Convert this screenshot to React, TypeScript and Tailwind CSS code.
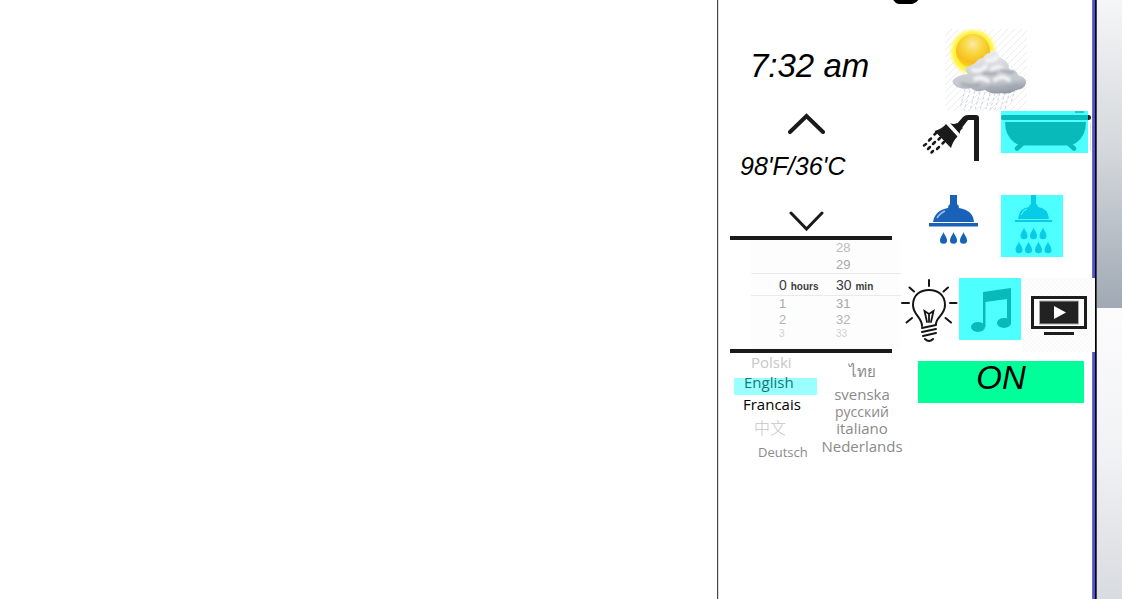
import React from "react";

function Weather() {
  return (
    <svg width="82" height="82" viewBox="0 0 82 82" aria-label="Sun, cloud and rain" role="img">
      <defs>
        <pattern id="hatch" width="7" height="7" patternUnits="userSpaceOnUse">
          <path d="M-1 8 8 -1" stroke="#ececec" strokeWidth="1" />
        </pattern>
        <radialGradient id="glow">
          <stop offset="62%" stopColor="#ffee1a" />
          <stop offset="80%" stopColor="#fff43c" stopOpacity="0.85" />
          <stop offset="100%" stopColor="#fffba0" stopOpacity="0" />
        </radialGradient>
        <radialGradient id="sun" cx="50%" cy="30%" r="75%">
          <stop offset="0%" stopColor="#fbeaa8" />
          <stop offset="35%" stopColor="#f9d842" />
          <stop offset="72%" stopColor="#f6bd1c" />
          <stop offset="100%" stopColor="#fae01c" />
        </radialGradient>
        <linearGradient id="cloud" x1="0.3" y1="0" x2="0.5" y2="1">
          <stop offset="0%" stopColor="#f0f1f3" />
          <stop offset="45%" stopColor="#d0d3d8" />
          <stop offset="75%" stopColor="#c3c7ce" />
          <stop offset="100%" stopColor="#9399a4" />
        </linearGradient>
        <filter id="soft" x="-30%" y="-30%" width="160%" height="160%">
          <feGaussianBlur stdDeviation="1.6" />
        </filter>
      </defs>
      <rect width="82" height="82" fill="url(#hatch)" />
      <circle cx="28" cy="23" r="25" fill="url(#glow)" />
      <circle cx="28" cy="22" r="17" fill="url(#sun)" />
      <g stroke="#ccd4e6" strokeWidth="1" strokeDasharray="3 2">
        <path d="M20 60 15 80M25 61 19 82M30 62 25 82M35 63 30 81M40 63 35 82M45 64 41 80M50 64 45 82M55 64 50 81M60 63 55 82M65 62 60 79M70 60 66 74" />
      </g>
      <path
        d="M12 58Q6 54 8 51Q12 46 23 45Q19 41 21 38Q26 37 30 34Q34 29 38 29Q41 24 45 24Q46 20 50 22Q54 24 54 28Q62 31 64 37Q63 39 65 41Q72 41 73 46Q82 49 81 54Q80 60 71 61Q64 66 56 64Q47 66 40 61Q31 64 26 59Q18 61 12 58Z"
        fill="url(#cloud)"
      />
      <g filter="url(#soft)" fill="none" strokeLinecap="round">
        <path d="M28 41Q36 43 41 37M42 31Q49 32 52 28M30 50Q37 47 43 52M50 51Q57 45 64 51M47 40Q53 36 57 39" stroke="#f5f6f8" strokeWidth="4" />
        <path d="M38 44Q46 46 51 44M56 41Q62 44 68 43M17 55Q27 58 34 56M44 60Q57 62 72 57" stroke="#a2a7b1" strokeWidth="3" />
      </g>
    </svg>
  );
}

function HandShower() {
  return (
    <svg width="64" height="54" viewBox="0 0 64 54" fill="#1a1a1a" aria-hidden="true">
      <path d="M33 15 41 6Q43 4 46 4H54Q57 4 57 7V50H52V9H46L39 18Z" />
      <path d="M28 12Q32 14 35 12L41 17Q37 20 38 23Z" />
      <path d="M24 13 35.500 25.500Q31 30 29 37L12.500 20Q20 18 24 13Z" />
      <g stroke="#1a1a1a" strokeWidth="2.500" strokeLinecap="round">
        <path d="M14 22 12.500 23.500M9 27.500 7 29.500M4 33 2 34.500M18 27 16.500 28.500M13 31 11 33M8 36 6 38M22 31 20.500 32.500M17 36 15 38M11 40 9.500 41.500" />
      </g>
    </svg>
  );
}

function Tub() {
  return (
    <svg className="overflow-visible" width="87" height="42" viewBox="0 0 87 42" aria-hidden="true">
      <path d="M86 4H87.500A2.500 2.500 0 0 1 87.500 9H86Z" fill="#222" />
      <path d="M89.500 11V40" stroke="#e2e2e2" strokeWidth="1" />
      <path d="M74 1H83" stroke="#08baba" strokeWidth="1.500" />
      <path d="M2 4H87V9H2Q0 9 0 7V6Q0 4 2 4ZM4 11H85Q85 25 75 32Q71 34.500 64 34.500H25Q18 34.500 14 32Q4 25 4 11Z" fill="#08baba" />
      <path d="M21 33 16 37.500M68 33 73 37.500" stroke="#08baba" strokeWidth="4.500" strokeLinecap="round" />
    </svg>
  );
}

const drop = "c1 3.500 3.500 5 3.500 8.500a3.500 3.300 0 0 1-7 0c0-3.500 2.500-5 3.500-8.500z";

function BlueShower() {
  return (
    <svg width="52" height="62" viewBox="0 0 52 62" fill="#1a62b7" aria-hidden="true">
      <path d="M22 0H29V9Q31 10 31 13Q45 15 46 27H5Q7 15 20 13Q20 10 22 9Z" />
      <path d="M1 28H50V31.500H1Z" />
      <path d="M9 23Q12 18 17 16" stroke="#9cc2ee" strokeWidth="1.500" fill="none" />
      {["15.500", "25.500", "35.500"].map((x) => (
        <path key={x} d={`M${x} 37${drop}`} />
      ))}
    </svg>
  );
}

function RainShower() {
  return (
    <svg width="62" height="62" viewBox="0 0 62 62" fill="#08cbe8" aria-hidden="true">
      <path d="M30 0H35V9Q37 10 37 12Q47 13 48 24H17Q18 13 28 12Q28 10 30 9Z" />
      <path d="M14 25H51V27H14Z" />
      <path d="M20 20Q22 15 26 14" stroke="#4dffff" fill="none" />
      {["23", "32.500", "42"].map((x) => (
        <path key={x} d={`M${x} 32.500${drop}`} />
      ))}
      {["18", "27.500", "37.500", "47"].map((x) => (
        <path key={x} d={`M${x} 46.500${drop}`} />
      ))}
    </svg>
  );
}

function Bulb() {
  return (
    <svg width="57" height="66" viewBox="0 0 57 66" fill="none" stroke="#151515" strokeWidth="2" strokeLinecap="round" aria-hidden="true">
      <path d="M21 48C21 39 12 37 12 27C12 17 19 12 28 12S44 17 44 27C44 37 35 39 35 46" />
      <path d="M28 2V8M8.500 9.500 13 13.500M47 9.500 42.500 13.500M1 25H8M49 25H55.500M5.500 44.500 11 40M50 44.500 44.500 40" />
      <path d="M26 44 23.500 33 28 36 32.500 33 30 44M28 36V44" strokeWidth="1.800" />
      <path d="M21 50 35 47M21 54 35 51M22 58 35 55M24 61Q28 65 32 61" />
    </svg>
  );
}

function Music() {
  return (
    <svg width="62" height="62" viewBox="0 0 62 62" fill="#08baba" aria-hidden="true">
      <path d="M24 14 52 10V46H48V21L26.500 24V49H24Z" />
      <ellipse cx="19" cy="49" rx="7" ry="5" />
      <ellipse cx="45" cy="45" rx="7" ry="5" />
    </svg>
  );
}

function Tv() {
  return (
    <svg width="73" height="74" viewBox="0 0 73 74" aria-hidden="true">
      <defs>
        <pattern id="fine" width="4" height="4" patternUnits="userSpaceOnUse">
          <path d="M-1 -1 5 5" stroke="#f3f3f3" strokeWidth=".6" />
        </pattern>
      </defs>
      <rect width="73" height="74" fill="#fdfdfd" />
      <rect width="73" height="74" fill="url(#fine)" />
      <rect x="10.500" y="19.500" width="53" height="30" fill="#fff" stroke="#1d1d1d" strokeWidth="3" />
      <rect x="17.500" y="23" width="39" height="23" fill="#222" stroke="#aaa" strokeWidth="1" />
      <path d="M32 28 44 34.500 32 41Z" fill="#fff" />
      <path d="M22 55.500H52" stroke="#1d1d1d" strokeWidth="3" />
    </svg>
  );
}

function Wheel() {
  return (
    <div className="ml-[21px] h-[109px] w-[150px] bg-[#fdfdfd] text-[13px] leading-4 text-[#a9a9a9]">
      <div className="grid h-4 grid-cols-[57px_1fr] items-center pl-7 text-[#bcbcbc]"><span /><span>28</span></div>
      <div className="grid h-[17px] grid-cols-[57px_1fr] items-center pl-7"><span /><span>29</span></div>
      <div className="grid h-[23px] grid-cols-[57px_1fr] items-center border-y border-[#eaeaea] pl-7 text-sm text-[#3c3c3c]">
        <span>0 <b className="text-[10px]">hours</b></span>
        <span>30 <b className="text-[10px]">min</b></span>
      </div>
      <div className="grid h-4 grid-cols-[57px_1fr] items-center pl-7"><span>1</span><span>31</span></div>
      <div className="grid h-4 grid-cols-[57px_1fr] items-center pl-7 text-[#b4b4b4]"><span>2</span><span>32</span></div>
      <div className="grid h-3 grid-cols-[57px_1fr] items-center pl-7 text-[10px] leading-3 text-[#d2d2d2]"><span>3</span><span>33</span></div>
    </div>
  );
}

export default function App() {
  return (
    <div className="flex min-h-screen bg-white font-['Liberation_Sans',sans-serif] text-black">
      <main className="flex-1" />
      <aside className="flex w-[380px] shrink-0 border-l border-[#444]">
        <div className="flex-1 border-l border-[#ddd]">
          <header className="flex h-1 items-end justify-end overflow-hidden pr-[163px] text-[60px] font-bold italic leading-[62px]">
            <span>g</span>
          </header>
          <div className="flex">
            <section className="w-[182px] shrink-0 pl-[11px]">
              <p className="mt-[42px] pl-5 text-[33px] italic leading-10">7:32 am</p>
              <button aria-label="Raise temperature" className="ml-[58px] mt-[27px] block">
                <svg width="37" height="21" viewBox="0 0 37 21"><path d="M2 19 18.500 3 35 19" fill="none" stroke="#1a1a1a" strokeWidth="4" strokeLinecap="round" /></svg>
              </button>
              <p className="mt-[17px] pl-[10px] text-[25px] italic leading-[30px]">98'F/36'C</p>
              <button aria-label="Lower temperature" className="ml-[58px] mt-[30px] block">
                <svg width="37" height="20" viewBox="0 0 37 20"><path d="M3 2 18.500 18 34 2" fill="none" stroke="#1a1a1a" strokeWidth="3" strokeLinecap="round" /></svg>
              </button>
              <div className="mt-[5px] h-1 w-[162px] bg-[#1a1a1a]" />
              <Wheel />
              <div className="h-1 w-[162px] bg-[#1a1a1a]" />
              <div className="flex font-['Open_Sans','Noto_Sans_CJK_SC',sans-serif] text-[15px] text-[#8a8a8a]">
                <div className="flex w-[91px] shrink-0 flex-col items-start">
                  <button className="ml-[21px] leading-[18px] text-[#c6c6c6]">Polski</button>
                  <button className="ml-1 mt-[7px] flex h-[17px] w-[83px] items-start bg-[#99ffff] pl-2.5 leading-[8px] text-[#127878]">English</button>
                  <button className="ml-[13px] leading-[18px] text-black">Francais</button>
                  <button className="ml-6 text-base font-light leading-[30px] text-[#c6c6c6]">中文</button>
                  <button className="ml-7 text-[13px] leading-[18px]">Deutsch</button>
                </div>
                <div className="flex w-[82px] shrink-0 flex-col items-center pt-2.5 leading-[17px]">
                  <button className="mb-1.5">ไทย</button>
                  <button>svenska</button>
                  <button className="text-sm leading-[17px]">русский</button>
                  <button>italiano</button>
                  <button className="leading-[19px]">Nederlands</button>
                </div>
              </div>
            </section>
            <section className="flex flex-1 flex-col">
              <div className="mt-[25px] pl-11"><Weather /></div>
              <div className="flex h-[54px] items-start pl-[21px]">
                <button aria-label="Hand shower"><HandShower /></button>
                <button aria-label="Bath" className="ml-[15px] bg-[#4dffff]"><Tub /></button>
              </div>
              <div className="mt-[30px] flex pl-[27px]">
                <button aria-label="Shower"><BlueShower /></button>
                <button aria-label="Rain shower" className="ml-[21px] bg-[#4dffff]"><RainShower /></button>
              </div>
              <div className="-mr-[3px] mt-[21px] flex items-start">
                <button aria-label="Light" className="mr-px shrink-0"><Bulb /></button>
                <button aria-label="Music" className="shrink-0 bg-[#4dffff]"><Music /></button>
                <button aria-label="Television" className="relative ml-px shrink-0"><Tv /></button>
              </div>
              <button className="ml-[17px] mr-2 mt-[9px] h-[42px] bg-[#00ff99] pb-2 text-[33px] italic leading-[34px]">ON</button>
            </section>
          </div>
        </div>
        <div className="flex w-[5px]">
          <span className="w-px bg-[#777]" />
          <span className="w-0.5 bg-[#4a4aff]" />
          <span className="w-px bg-black" />
          <span className="w-px bg-[#444]" />
        </div>
      </aside>
      <div className="flex w-[25px] shrink-0 flex-col">
        <div className="h-[308px] bg-linear-to-b from-[#f5f6f7] via-[#d3d7db] to-[#a0a9b4]" />
        <div className="flex-1 bg-linear-to-b from-[#fcfcfd] via-[#f1f2f4] to-[#d8dbe0]" />
      </div>
    </div>
  );
}
